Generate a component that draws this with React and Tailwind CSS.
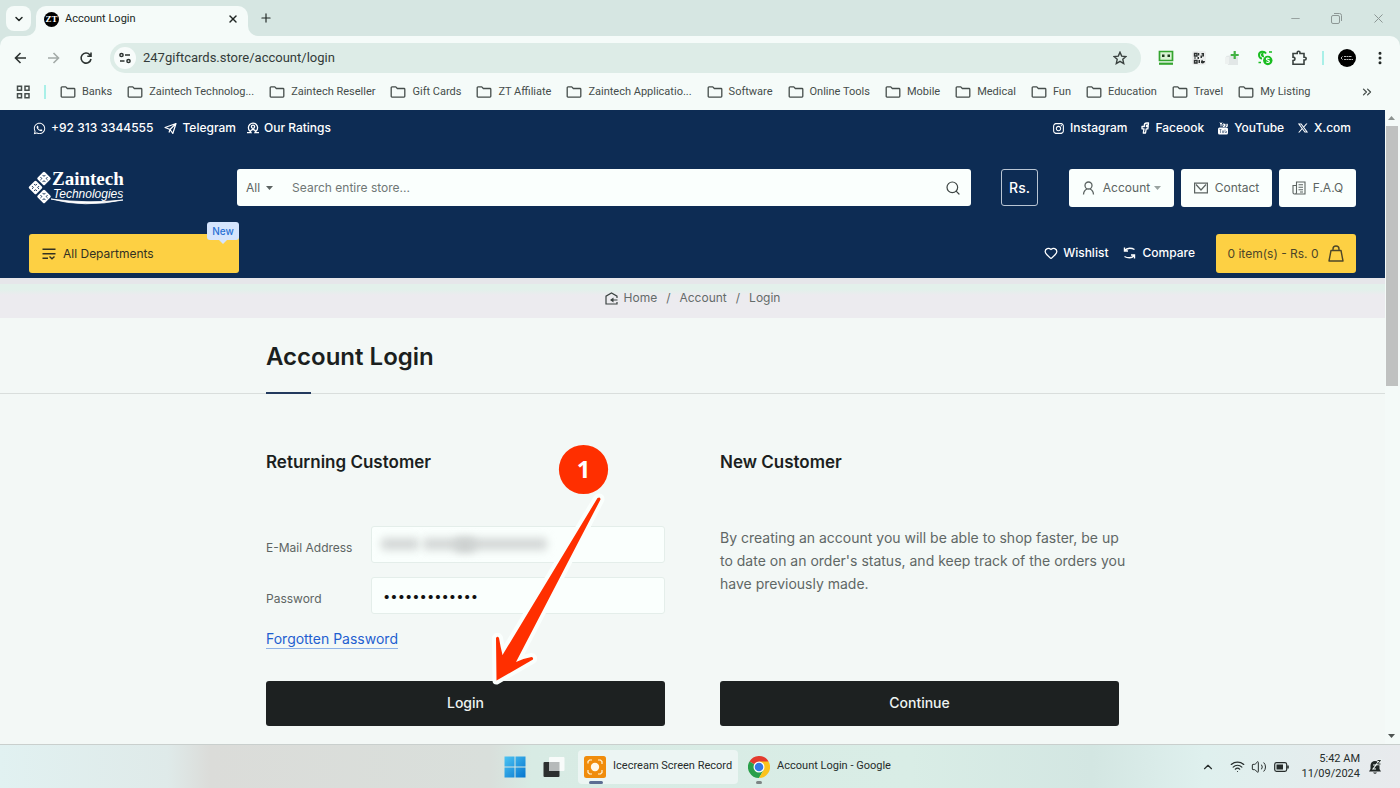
import { useState } from "react";
import {
  ChevronDown,
  ChevronUp,
  ChevronsRight,
  Heart,
  Minus,
  MoreVertical,
  Plus,
  Search,
  Volume2,
  Wifi,
  X,
} from "lucide-react";
import { FaWhatsapp } from "react-icons/fa";
import { RiInstagramLine, RiTwitterXLine } from "react-icons/ri";

const BOOKMARKS = [
  "Banks",
  "Zaintech Technolog...",
  "Zaintech Reseller",
  "Gift Cards",
  "ZT Affiliate",
  "Zaintech Applicatio...",
  "Software",
  "Online Tools",
  "Mobile",
  "Medical",
  "Fun",
  "Education",
  "Travel",
  "My Listing",
];

export default function App() {
  return (
    <div className="min-h-screen flex flex-col bg-[#f3f8f6] overflow-hidden">
      <BrowserChrome />
      <div className="flex flex-1">
        <div className="flex-1 min-w-0 font-['Inter',sans-serif]">
          <StoreHeader />
          <Breadcrumb />
          <LoginPage />
        </div>
        <Scrollbar />
      </div>
      <Taskbar />
    </div>
  );
}

/* ===============================
   BROWSER CHROME
================================= */
function BrowserChrome() {
  return (
    <div className="bg-[#d6e6e2] font-['Roboto','Noto_Sans',sans-serif] text-[#202624]">
      {/* Tab strip */}
      <div className="h-9 flex items-end px-1.5">
        <button
          aria-label="Search tabs"
          className="w-[25px] h-[25px] mb-[5px] rounded-lg bg-[#f5fbf9] flex items-center justify-center"
        >
          <ChevronDown size={12} strokeWidth={3} />
        </button>

        <div className="relative w-[212px] h-[30px] ml-[5px] pl-2 pr-[5px] pb-1 flex items-center rounded-t-[10px] bg-[#f5fbf9]">
          <TabCorner className="absolute bottom-0 -left-2.5" />
          <TabCorner className="absolute bottom-0 -right-2.5 -scale-x-100" />
          <Favicon />
          <span className="ml-1.5 text-[11px] flex-1">Account Login</span>
          <button aria-label="Close tab" className="mr-1">
            <X size={12} strokeWidth={2.8} />
          </button>
        </div>

        <button aria-label="New tab" className="ml-[11px] mb-[11px]">
          <Plus size={14} strokeWidth={2} />
        </button>

        <div className="ml-auto mr-2 mb-2.5 flex items-center gap-[29px] text-[#8d9795]">
          <button aria-label="Minimize"><Minus size={13} strokeWidth={1.6} /></button>
          <button aria-label="Restore"><RestoreIcon /></button>
          <button aria-label="Close"><X size={15} strokeWidth={1.6} /></button>
        </div>
      </div>

      {/* Toolbar */}
      <div className="h-11 rounded-t-[10px] bg-[#f5fbf9] flex items-center pl-3 pr-3">
        <div className="flex items-center gap-4 text-[#2c3331]">
          <button aria-label="Back"><ArrowIcon /></button>
          <button aria-label="Forward" className="text-[#a3aba8]"><ArrowIcon flip /></button>
          <button aria-label="Reload"><ReloadIcon /></button>
        </div>

        <div className="flex-1 h-[30px] ml-4 rounded-full bg-[#ddece7] flex items-center pl-1 pr-3.5">
          <span className="w-[22px] h-[22px] rounded-full bg-[#f8fcfb] flex items-center justify-center">
            <TuneIcon />
          </span>
          <input
            aria-label="Address"
            defaultValue="247giftcards.store/account/login"
            className="flex-1 ml-[7px] bg-transparent text-[13px] text-[#333b39] outline-none"
          />
          <button aria-label="Bookmark this page"><StarIcon /></button>
        </div>

        <div className="flex items-center gap-[17px] ml-[17px]">
          <RobotIcon />
          <QrIcon />
          <PlusCardIcon />
          <MoneyIcon />
          <PuzzleIcon />
        </div>
        <span className="w-0.5 h-3.5 ml-3.5 bg-[#a9f0e8]" />
        <span className="w-[18px] h-[18px] ml-3.5 rounded-full bg-black flex items-center justify-center">
          <svg width="14" height="8" viewBox="0 0 14 8" stroke="#bbb" strokeWidth="1">
            <path d="M1 4l2-2M1 4l2 2M4 2.5h8M4 5.5h9" strokeDasharray="2 .5" />
          </svg>
        </span>
        <button aria-label="Menu" className="ml-4"><MoreVertical size={16} strokeWidth={2.5} /></button>
      </div>

      {/* Bookmarks */}
      <div className="h-[30px] pb-1.5 bg-[#f5fbf9] flex items-center pl-4 pr-[26px] text-[11px] text-[#454d4b] whitespace-nowrap">
        <button aria-label="Apps"><AppsIcon /></button>
        <span className="w-0.5 h-3.5 ml-[13px] mr-3.5 bg-[#a9f0e8]" />
        <div className="flex items-center gap-[15px]">
          {BOOKMARKS.map((name) => (
            <a key={name} href="#" className="flex items-center gap-1.5">
              <FolderIcon />
              {name}
            </a>
          ))}
        </div>
        <button aria-label="More bookmarks" className="ml-auto">
          <ChevronsRight size={14} strokeWidth={2.2} />
        </button>
      </div>
    </div>
  );
}

/* ===============================
   STORE HEADER
================================= */
function StoreHeader() {
  return (
    <header className="bg-[#0d2c54] text-white pl-[29px] pr-[29px] pb-[5px]">
      {/* Top bar */}
      <div className="h-9 pl-1 pr-[5px] flex items-center justify-between text-[12px] font-medium">
        <div className="flex items-center gap-[11px]">
          <TopLink icon={<FaWhatsapp size={13} />}>+92 313 3344555</TopLink>
          <TopLink icon={<PlaneIcon />}>Telegram</TopLink>
          <TopLink icon={<RatingIcon />}>Our Ratings</TopLink>
        </div>
        <div className="flex items-center gap-[13px]">
          <TopLink icon={<RiInstagramLine size={13} />}>Instagram</TopLink>
          <TopLink icon={<FacebookIcon />}>Faceook</TopLink>
          <TopLink icon={<YoutubeIcon />}>YouTube</TopLink>
          <TopLink icon={<RiTwitterXLine size={12} />}>X.com</TopLink>
        </div>
      </div>

      {/* Logo, search and links */}
      <div className="h-[83px] flex items-center">
        <a href="#" aria-label="Zaintech Technologies" className="w-[208px]"><Logo /></a>

        <form className="flex-1 h-[37px] flex items-center bg-[#fafffd] rounded-[3px] text-[#5c6462]">
          <button type="button" className="h-full pl-[9px] flex items-center gap-1.5 text-[12px]">
            All <Caret />
          </button>
          <input
            aria-label="Search entire store"
            placeholder="Search entire store..."
            className="flex-1 ml-[19px] text-[12px] bg-transparent outline-none placeholder:text-[#6f7775]"
          />
          <button type="button" aria-label="Search" className="px-2.5 text-[#3d4543]">
            <Search size={16} strokeWidth={1.8} />
          </button>
        </form>

        <button className="w-[37px] h-[37px] ml-[30px] mr-[31px] rounded-[3px] border border-[#b9c5d3] text-[14px] font-medium">
          Rs.
        </button>

        <div className="flex gap-[7px] text-[12px] text-[#5c6462]">
          <button className="w-[105px] h-[38px] rounded-[3px] bg-[#fafffd] flex items-center justify-center gap-2">
            <PersonIcon />
            <span className="flex items-center gap-1">Account <span className="text-[#9aa3a0]"><Caret /></span></span>
          </button>
          <a href="#" className="w-[91px] h-[38px] rounded-[3px] bg-[#fafffd] flex items-center justify-center gap-[7px]">
            <EnvelopeIcon /> Contact
          </a>
          <a href="#" className="w-[77px] h-[38px] rounded-[3px] bg-[#fafffd] flex items-center justify-center gap-[7px]">
            <NewsIcon /> F.A.Q
          </a>
        </div>
      </div>

      {/* Nav row */}
      <div className="h-11 flex items-end justify-between">
        <button className="relative w-[210px] h-[39px] pl-[13px] rounded-[3px] bg-[#fdd043] text-[#333122] text-[12px] flex items-center gap-[7px]">
          <MenuIcon />
          All Departments
          <span className="absolute -top-3 right-0 w-8 h-[18px] rounded-[3px] bg-[#d5e5fd] text-[#2a72d4] text-[10px] font-medium flex items-center justify-center">
            New
            <span className="absolute -bottom-1 border-x-4 border-t-4 border-x-transparent border-t-[#d5e5fd]" />
          </span>
        </button>

        <div className="h-[39px] flex items-center text-[12px] font-medium">
          <a href="#" className="pb-0.5 flex items-center gap-[5px]">
            <Heart size={14} strokeWidth={2.2} /> Wishlist
          </a>
          <a href="#" className="ml-[15px] pb-0.5 flex items-center gap-1.5">
            <CompareIcon /> Compare
          </a>
          <button className="w-[140px] h-[39px] ml-[21px] rounded-[3px] bg-[#fdd043] text-[#4d4628] font-normal flex items-center justify-center gap-2.5">
            0 item(s) - Rs. 0 <BagIcon />
          </button>
        </div>
      </div>
    </header>
  );
}

function TopLink({ icon, children }) {
  return (
    <a href="#" className="flex items-center gap-[5px]">
      {icon}
      {children}
    </a>
  );
}

function Breadcrumb() {
  return (
    <nav
      aria-label="Breadcrumb"
      className="h-10 bg-[linear-gradient(#e6e6ea_0_6px,#e3f0eb_6px_12px,#ecebef_17px)] flex items-center justify-center gap-[9px] text-[12px] text-[#646c6a]"
    >
      <a href="#" className="flex items-center gap-1.5"><HomeIcon />Home</a>
      <span>/</span>
      <a href="#">Account</a>
      <span>/</span>
      <a href="#">Login</a>
    </nav>
  );
}

/* ===============================
   LOGIN PAGE
================================= */
function LoginPage() {
  const [password, setPassword] = useState("0000000000000");

  return (
    <main className="text-[#1b1f1e]">
      {/* Title */}
      <div className="border-b border-[#d9dedc]">
        <div className="max-w-[853px] h-[75px] mx-auto flex flex-col justify-between">
          <h1 className="pt-[21px] text-[24px] leading-9 font-semibold">Account Login</h1>
          <span className="w-[45px] h-0.5 -mb-px bg-[#233a5e]" />
        </div>
      </div>

      <div className="relative max-w-[853px] mx-auto pt-[54px] pb-[18px] grid grid-cols-2 gap-[55px]">
        {/* Returning customer */}
        <form className="flex flex-col" onSubmit={(e) => e.preventDefault()}>
          <h2 className="text-[17px] leading-7 font-semibold">Returning Customer</h2>

          <div className="mt-[50px] flex items-center text-[12px] text-[#5d6563]">
            <label htmlFor="email" className="w-[105px] pt-1.5">E-Mail Address</label>
            <div className="relative flex-1">
              <input
                id="email"
                type="email"
                className="w-full h-[37px] px-3 rounded-[3px] border border-[#e4eeea] bg-[#fafffd]"
              />
              <span className="absolute left-2.5 top-3 w-[38px] h-3 rounded bg-[#d3d7d6] blur-[4px]" />
              <span className="absolute left-[52px] top-3 w-[124px] h-3 rounded bg-[#d3d7d6] blur-[4px]" />
              <span className="absolute left-[84px] top-3 w-5 h-3.5 rounded bg-[#cdd1d0] blur-[4px]" />
            </div>
          </div>

          <div className="mt-3.5 flex items-center text-[12px] text-[#5d6563]">
            <label htmlFor="password" className="w-[105px] pt-1.5">Password</label>
            <input
              id="password"
              type="password"
              value={password}
              onChange={(e) => setPassword(e.target.value)}
              className="flex-1 h-[37px] px-[11px] rounded-[3px] border border-[#e4eeea] bg-[#fafffd] text-[13px] text-[#111]"
            />
          </div>

          <a href="#" className="mt-4 self-start text-[14px] leading-[18px] text-[#1f5fd0] border-b border-[#8fb2e6]">
            Forgotten Password
          </a>

          <button className="mt-8 h-[45px] pb-0.5 rounded-[3px] bg-[#1d2121] text-[14px] font-medium text-[#eef3f1]">
            Login
          </button>
        </form>

        {/* New customer */}
        <div className="flex flex-col">
          <h2 className="text-[17px] leading-7 font-semibold">New Customer</h2>
          <p className="mt-[50px] -mr-2 text-[14px] leading-[23px] text-[#5f6765]">
            By creating an account you will be able to shop faster, be up to date on an order's status, and keep track of
            the orders you have previously made.
          </p>
          <button className="mt-auto h-[45px] pb-0.5 rounded-[3px] bg-[#1d2121] text-[14px] font-medium text-[#eef3f1]">
            Continue
          </button>
        </div>

        <StepMarker />
      </div>
    </main>
  );
}

/* Step number with an arrow to the login button */
function StepMarker() {
  return (
    <div className="absolute left-[224px] top-[50px] pointer-events-none">
      <svg width="125" height="250" viewBox="0 0 125 250">
        <circle cx="93.500" cy="25.500" r="24.600" fill="#ff2f00" />
        <path
          d="M107.500 54L12.500 211Q10.500 203 9 194Q7.500 191.500 6 194L6.500 236.500L43 215.500Q43.500 213 41.500 213Q33 214.500 26 218L110.500 55.500Q110.500 52.500 107.500 54Z"
          fill="#ff2f00"
          stroke="#fafffd"
          strokeWidth="8"
          strokeLinejoin="round"
          paintOrder="stroke"
        />
      </svg>
      <span className="absolute left-[69px] top-1 w-[49px] text-center text-[24px] leading-[42px] font-bold text-white font-['Open_Sans',sans-serif]">
        1
      </span>
    </div>
  );
}

function Scrollbar() {
  return (
    <div className="w-[15px] pr-0.5 py-1.5 bg-[#f4faf8] flex flex-col items-center">
      <svg width="7" height="4" viewBox="0 0 7 4" fill="#8c9290"><path d="M0 4L3.500 0L7 4z" /></svg>
      <span className="w-3 h-[260px] mt-1.5 bg-[#bfc1c0]" />
      <svg className="mt-auto" width="7" height="4" viewBox="0 0 7 4" fill="#4e5452"><path d="M0 0L3.500 4L7 0z" /></svg>
    </div>
  );
}

/* ===============================
   TASKBAR
================================= */
function Taskbar() {
  return (
    <footer className="h-11 border-t border-[#c9cfcd] bg-[linear-gradient(90deg,#e1f1f1,#dfeae9_12%,#dbdcd9_15%,#d9dfdb_35%,#d8ebe4_38%,#d9ede6_65%,#d3e6e2_78%,#dff0ee_86%,#e8eaed)] flex items-center font-['Roboto','Noto_Sans',sans-serif] text-[11px] text-[#262c2b]">
      <div className="flex-1" />
      <div className="flex items-center">
        <button aria-label="Start"><WindowsIcon /></button>
        <button aria-label="Task view" className="ml-[17px]"><TaskViewIcon /></button>
        <button className="relative w-40 h-[34px] ml-[13px] pl-1.5 rounded bg-[#ecf5f3] flex items-center gap-[7px] whitespace-nowrap">
          <RecorderIcon />
          Icecream Screen Record
          <span className="absolute bottom-0 left-[11px] w-3.5 h-[3px] rounded-full bg-[#5c6d92]" />
        </button>
        <button className="relative h-[34px] ml-2.5 pr-[5px] flex items-center gap-[7px] whitespace-nowrap">
          <ChromeIcon />
          Account Login - Google
          <span className="absolute bottom-0 left-2 w-1.5 h-[3px] rounded-full bg-[#7d8584]" />
        </button>
      </div>
      <div className="flex-1">
        <div className="flex items-center justify-end pr-[18px]">
          <ChevronUp size={14} strokeWidth={2} />
          <Wifi size={15} strokeWidth={1.8} className="ml-[15px]" />
          <Volume2 size={16} strokeWidth={1.5} className="ml-1.5" />
          <BatteryIcon />
          <div className="ml-3 mb-0.5 text-right leading-[15px]">
            <p>5:42 AM</p>
            <p>11/09/2024</p>
          </div>
          <BellIcon />
        </div>
      </div>
    </footer>
  );
}

/* ===============================
   ICONS
================================= */
function TabCorner({ className }) {
  return (
    <svg className={className} width="10" height="10" viewBox="0 0 10 10" fill="#f5fbf9">
      <path d="M10 0V10H0A10 10 0 0 0 10 0z" />
    </svg>
  );
}

function Favicon() {
  return (
    <span className="w-[15px] h-[15px] rounded-full bg-black text-white text-[9px] leading-none font-bold font-['Liberation_Serif',serif] flex items-center justify-center">
      ZT
    </span>
  );
}

function RestoreIcon() {
  return (
    <svg width="11" height="11" viewBox="0 0 11 11" fill="none" stroke="currentColor" strokeWidth="1">
      <rect x=".5" y="2.500" width="8" height="8" rx="1.500" />
      <path d="M3 .5h5.500a2 2 0 0 1 2 2V8" />
    </svg>
  );
}

function ArrowIcon({ flip }) {
  return (
    <svg width="17" height="16" viewBox="0 0 17 16" fill="none" stroke="currentColor" strokeWidth="1.600" className={flip ? "-scale-x-100" : ""}>
      <path d="M14 8H3.500M8.500 3L3.500 8L8.500 13" />
    </svg>
  );
}

function ReloadIcon() {
  return (
    <svg width="16" height="16" viewBox="0 0 16 16" fill="none" stroke="currentColor" strokeWidth="1.600">
      <path d="M13 9A5 5 0 1 1 11.800 4.700L13 6M13 2.500V6.200H9.300" />
    </svg>
  );
}

function TuneIcon() {
  return (
    <svg width="14" height="12" viewBox="0 0 14 12" fill="none" stroke="#2c3331" strokeWidth="1.500">
      <circle cx="3.500" cy="3" r="1.600" />
      <path d="M7 3h5M2 9h4.500" />
      <circle cx="10.500" cy="9" r="1.600" />
    </svg>
  );
}

function StarIcon() {
  return (
    <svg width="14" height="14" viewBox="0 0 14 14" fill="none" stroke="#39413f" strokeWidth="1.400">
      <path d="M7 1.200l1.700 3.900 4.300.4-3.200 2.800.9 4.200L7 10.300 3.300 12.500l.9-4.200L1 5.500l4.300-.4z" />
    </svg>
  );
}

function RobotIcon() {
  return (
    <svg width="16" height="16" viewBox="0 0 16 16">
      <path d="M1.500 1.500h13v9h-13z" fill="#d9f2d4" stroke="#34a52f" strokeWidth="1.700" />
      <path d="M4 4.500h2.500V7H4zM9.500 4.500H12V7H9.500z" fill="#1c3a1b" />
      <path d="M1 13.700h14" stroke="#34a52f" strokeWidth="2.200" />
    </svg>
  );
}

function QrIcon() {
  return (
    <svg width="16" height="16" viewBox="0 0 16 16">
      <rect x="1" y="1" width="14" height="14" rx="2" fill="#eceeee" />
      <path d="M3.500 3.500h2.500v2.500H3.500zM3.500 10.500h2.500v2.500H3.500z" fill="none" stroke="#2d3231" strokeWidth="1.400" />
      <path d="M10.500 3H13v3.500h-2V8H9.500V5.500h2V4.500h-1zM7 3h1.300v2.500H7zM3 7.500h2v1H3zM6.500 7h1.500v2H6.500zM7.500 10h1.500v3H7.500zM10 11.500l1-2 1 1.500h2c0 2-2 3-4 2z" fill="#2d3231" />
    </svg>
  );
}

function PlusCardIcon() {
  return (
    <svg width="16" height="16" viewBox="0 0 16 16">
      <path d="M2 6l7-1 5 2v8H4z" fill="#e2e7e7" />
      <path d="M1 7h4v7H1z" fill="#edf1f0" />
      <path d="M10.700 1v8M6.700 5h8" stroke="#43b344" strokeWidth="2.200" />
    </svg>
  );
}

function MoneyIcon() {
  return (
    <svg width="17" height="16" viewBox="0 0 17 16" fill="none" stroke="#19bd20">
      <path d="M9 3.500C7 .5 2 1.500 2 5c0 2 1.500 3.500 3 3.500M6.500 3.500C4 4 4.500 6.500 7 6.500" strokeWidth="2" />
      <path d="M12 2h3M1.500 12.500h2.500" strokeWidth="1.700" />
      <circle cx="10.800" cy="10.500" r="4.700" fill="#19bd20" stroke="none" />
      <path d="M12.500 8.700c-1.500-1-3.400-.6-3 .7s3 .7 2.900 2-2.200 1.400-3.200.5" stroke="#fff" strokeWidth="1.200" />
    </svg>
  );
}

function PuzzleIcon() {
  return (
    <svg width="17" height="16" viewBox="0 0 17 16" fill="none" stroke="#39413f" strokeWidth="1.600">
      <path d="M2 3.500h4.200V2.600a1.400 1.400 0 0 1 2.800 0v.9h4v3.700h.8a1.400 1.400 0 0 1 0 2.800H13v4.200H2v-3.700c2.600 0 2.600-3.400 0-3.400z" />
    </svg>
  );
}

function AppsIcon() {
  return (
    <svg width="15" height="14" viewBox="0 0 15 14" fill="none" stroke="#454d4b" strokeWidth="1.500">
      <path d="M1.500 1.300h4v4h-4zM9 1.300h4v4H9zM1.500 8.700h4v4h-4zM9 8.700h4v4H9z" />
    </svg>
  );
}

function FolderIcon() {
  return (
    <svg width="16" height="13" viewBox="0 0 16 13" fill="none" stroke="#454d4b" strokeWidth="1.300" strokeLinejoin="round">
      <path d="M1.200 10.300V1.700q0-.8.8-.8H5.800l1.500 1.600H14q.8 0 .8.8V10.300q0 .8-.8.8H2q-.8 0-.8-.8z" />
    </svg>
  );
}

function Caret() {
  return (
    <svg width="7" height="4" viewBox="0 0 7 4" fill="currentColor"><path d="M0 0h7L3.500 4z" /></svg>
  );
}

function PlaneIcon() {
  return (
    <svg width="13" height="13" viewBox="0 0 13 13" fill="none" stroke="currentColor" strokeWidth="1.200" strokeLinejoin="round">
      <path d="M1 5.500L12 1.500L8.800 11.500L6 7.500zM6 7.500L12 1.500M6 7.500L5 10.500" />
    </svg>
  );
}

function RatingIcon() {
  return (
    <svg width="12" height="12" viewBox="0 0 12 12" fill="none" stroke="currentColor" strokeWidth="1.300">
      <path d="M2.800 9A4.600 4.600 0 1 1 9.200 9M0 10.700h4l-1.200-2.200M12 10.700H8l1.200-2.200" />
      <circle cx="6" cy="4.700" r="1.600" />
      <path d="M3.500 9q2.500-3 5 0" />
    </svg>
  );
}

function FacebookIcon() {
  return (
    <svg width="10" height="12" viewBox="0 0 10 12" fill="none" stroke="currentColor" strokeWidth="1.300" strokeLinejoin="round">
      <path d="M8.500 1H6.800Q4.300 1 4.300 3.300V4.500H2V6.800H4L3.300 11H5.500L6.200 6.800H7.800L8.200 4.500H6.400V3.700Q6.400 3.100 7 3.100H8.300z" />
    </svg>
  );
}

function YoutubeIcon() {
  return (
    <svg width="12" height="13" viewBox="0 0 12 13">
      <path d="M3 .5l1 2v2M5 .5l-1 2M6 2v2.500h1.500V2zM9 1.800v2.700h1.300V1.800" fill="none" stroke="currentColor" />
      <rect x="1" y="5.500" width="10" height="7" rx="1.500" fill="currentColor" />
      <path d="M2.500 7.500h2M3.500 7.500v3.500M5.500 8.500v2.200h1V8.500M8 7.500v3h1.500V9" fill="none" stroke="#0d2c54" strokeWidth=".5" />
    </svg>
  );
}

function Logo() {
  return (
    <svg className="overflow-visible" width="98" height="36" viewBox="0 0 98 36" fill="#fff">
      {[[15, 8.500], [6.500, 17.500], [15, 26.500]].map(([x, y]) => (
        <g key={y} transform={`translate(${x} ${y}) rotate(45)`}>
          <rect x="-5.200" y="-5.200" width="10.400" height="10.400" rx="1.500" />
          <path d="M-3.500-1.500h2v-2M3.500-1.500h-2v-2M-3.500 1.500h2v2M3.500 1.500h-2v2" stroke="#0d2c54" strokeWidth=".9" fill="none" />
        </g>
      ))}
      <text x="23" y="15" fontSize="19" fontWeight="700" fontFamily="'Liberation Serif', serif">Zaintech</text>
      <text x="24" y="28" fontSize="12" fontStyle="italic" fontFamily="'Liberation Sans', sans-serif">Technologies</text>
      <path d="M22 29Q55 38 94 30Q58 34 22 29z" stroke="#fff" strokeWidth=".8" />
    </svg>
  );
}

function PersonIcon() {
  return (
    <svg width="13" height="14" viewBox="0 0 13 14" fill="none" stroke="currentColor" strokeWidth="1.300">
      <circle cx="6.500" cy="4.500" r="3.500" />
      <path d="M1.500 13.500Q1.700 9.500 5 8M11.500 13.500Q11.300 9.500 8 8" />
    </svg>
  );
}

function EnvelopeIcon() {
  return (
    <svg width="14" height="12" viewBox="0 0 14 12" fill="none" stroke="currentColor" strokeWidth="1.200">
      <path d="M.6 1.100h12.800v9.800H.6zM2 2.500l5 5.500 5-5.500" />
    </svg>
  );
}

function NewsIcon() {
  return (
    <svg width="14" height="14" viewBox="0 0 14 14" fill="none" stroke="currentColor" strokeWidth="1.100">
      <path d="M4.500 1h8.500v12H2.500Q1 13 1 11.500V4.500h3.500zM4.500 4.500V11.500Q4.500 13 2.800 13M6.500 3.800h4.500M6.500 6.300h4.500M6.500 8.700h4.500M8 11h3" />
    </svg>
  );
}

function MenuIcon() {
  return (
    <svg width="14" height="12" viewBox="0 0 14 12" fill="none" stroke="currentColor" strokeWidth="1.400">
      <path d="M.5 1.200h13M.5 5.700h13M.5 10.300h5.500M7.500 8.500l2.500 2.300 2.500-2.300" />
    </svg>
  );
}

function CompareIcon() {
  return (
    <svg width="13" height="12" viewBox="0 0 13 12" fill="none" stroke="currentColor" strokeWidth="1.400">
      <path d="M1.500 .5v3.500H5M1.500 4Q3.500 1.200 6.500 1.200Q9.500 1.200 11.500 2.500M11.500 11.500V8H8M11.500 8Q9.500 10.800 6.500 10.800Q3.500 10.800 1.500 9.500" />
    </svg>
  );
}

function BagIcon() {
  return (
    <svg width="16" height="17" viewBox="0 0 16 17" fill="none" stroke="currentColor" strokeWidth="1.400" strokeLinejoin="round">
      <path d="M3 5.500h10l2 10.500H1zM5 5.500V4a3 3 0 0 1 6 0v1.500" />
    </svg>
  );
}

function HomeIcon() {
  return (
    <svg width="13" height="13" viewBox="0 0 13 13" fill="none" stroke="#3b4341" strokeWidth="1.200">
      <path d="M12 6V4.200L6.500 1L1 4.200V12H12V10M12.500 8H6.500" />
      <path d="M8.500 5.500v5L5 8z" fill="#3b4341" stroke="none" />
    </svg>
  );
}

function WindowsIcon() {
  return (
    <svg width="22" height="22" viewBox="0 0 22 22">
      <defs>
        <linearGradient id="win" x1="0" y1="0" x2="1" y2="1">
          <stop offset="0" stopColor="#4cc4f3" />
          <stop offset="1" stopColor="#0675cf" />
        </linearGradient>
      </defs>
      <path d="M0.500 0.500h10v10h-10zM11.500 .5h10v10h-10zM.5 11.500h10v10h-10zM11.500 11.500h10v10h-10z" fill="url(#win)" />
    </svg>
  );
}

function TaskViewIcon() {
  return (
    <svg width="22" height="22" viewBox="0 0 22 22">
      <rect x=".5" y="6" width="16" height="15" rx="1" fill="#2c2f2f" />
      <rect x="6" y="1" width="15.500" height="14" rx="1" fill="#f8fbfa" />
      <path d="M6 6h10.500v9H6z" fill="#b6baba" />
    </svg>
  );
}

function RecorderIcon() {
  return (
    <svg width="22" height="22" viewBox="0 0 22 22" fill="none">
      <rect width="22" height="22" rx="2.500" fill="#f08c0c" />
      <path d="M4 7.500V5.500L5.500 4H8M14 4h2.500L18 5.500V8M18 14v2.500L16.500 18H14M8 18H5.500L4 16.500V14" stroke="#fff3d8" strokeWidth="1.200" />
      <circle cx="11" cy="11" r="4.200" fill="#fff8ea" />
    </svg>
  );
}

function ChromeIcon() {
  return (
    <svg width="22" height="22" viewBox="0 0 22 22">
      <path d="M11 11L1.470 5.500A11 11 0 0 1 20.530 5.500z" fill="#e33b2e" />
      <path d="M11 11L1.470 5.500A11 11 0 0 0 11 22L15.760 13.750z" fill="#2a9f4a" />
      <path d="M11 5.500H20.530A11 11 0 0 1 11 22L15.760 13.750z" fill="#fcc31c" />
      <circle cx="11" cy="11" r="5.500" fill="#fff" />
      <circle cx="11" cy="11" r="4.300" fill="#3578e5" />
    </svg>
  );
}

function BatteryIcon() {
  return (
    <svg className="ml-[7px]" width="15" height="10" viewBox="0 0 15 10" fill="none" stroke="#262c2b" strokeWidth="1.200">
      <rect x=".7" y=".7" width="12" height="8.600" rx="1.800" />
      <path d="M2.500 2.500h6.500v5H2.500z" fill="#262c2b" stroke="none" />
      <path d="M14 3.500v3" strokeWidth="1.600" />
    </svg>
  );
}

function BellIcon() {
  return (
    <svg className="ml-2" width="14" height="16" viewBox="0 0 14 16">
      <path d="M1 12.500L2.500 10V6.500A4.500 4.500 0 0 1 11.500 6.500V10L13 12.500zM5 13.500h4q-2 2.500-4 0z" fill="#202625" />
      <path d="M5 6h3L5 10h3" fill="none" stroke="#eef5f3" strokeWidth="1.100" />
      <path d="M9.500 1.500h3L9.500 5h3" fill="none" stroke="#eef5f3" strokeWidth="2.400" />
      <path d="M9.500 1.500h3L9.500 5h3" fill="none" stroke="#202625" strokeWidth="1" />
    </svg>
  );
}
